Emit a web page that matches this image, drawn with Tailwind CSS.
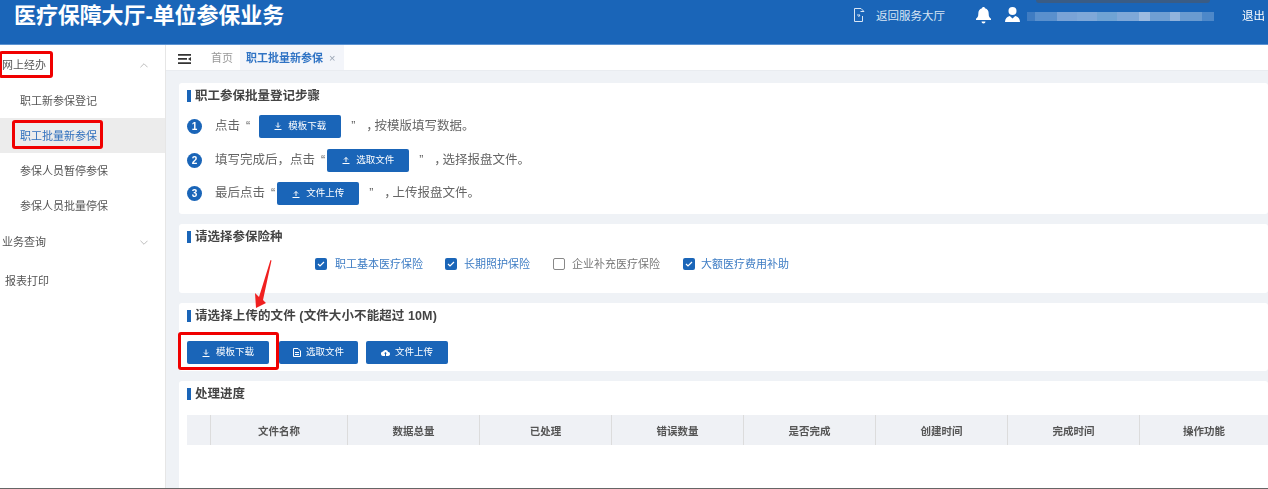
<!DOCTYPE html>
<html lang="zh">
<head>
    <meta charset="UTF-8">
    <title>医疗保障大厅-单位参保业务</title>
    <script src="https://cdn.jsdelivr.net/npm/@tailwindcss/browser@4"></script>
</head>
<body class="bg-white font-['Liberation_Sans','Noto_Sans_CJK_SC',sans-serif]">
<div class="relative w-[1268px] h-[489px] overflow-hidden flex flex-col blur-[0.6px]">

    <!-- header -->
    <header class="h-[45px] shrink-0 bg-[#1a65b8] border-b border-[#5c93d2] flex pt-[3px] pl-[14px] text-white">
        <h1 class="text-[22px] leading-[25px] font-bold tracking-[-0.1px]">医疗保障大厅-单位参保业务</h1>
        <div class="ml-auto flex items-start pt-[3px] text-[11.500px] leading-[20px] text-[#d8e5f4]">
            <svg class="w-[12px] h-[16px] mt-[1px]" viewBox="0 0 12 16" fill="none" stroke="#d8e5f4" stroke-width="1">
                <path d="M8 1.500H1.500v13h8V9"/><path d="M8 1.500l3 3M11 4.500H7.500"/><path d="M4 8h3l-1.500 2"/>
            </svg>
            <span class="ml-[11px] w-[99px]">返回服务大厅</span>
            <svg class="w-[17px] h-[18px]" viewBox="0 0 17 18" fill="#fff">
                <path d="M8.500 1c.9 0 1.500.6 1.500 1.300 2.600.7 3.700 2.800 3.700 5.500 0 2.500.6 3.800 2.300 5v1.200H1v-1.200c1.700-1.200 2.300-2.500 2.300-5 0-2.700 1.100-4.800 3.700-5.500C7 1.600 7.600 1 8.500 1zM6.500 15.500h4a2 2 0 0 1-4 0z"/>
            </svg>
            <svg class="ml-[12px] w-[17px] h-[17px]" viewBox="0 0 17 17" fill="#fff">
                <circle cx="8.500" cy="5" r="4"/>
                <path d="M1 16c0-3.500 2-5.500 4.800-6l2.700 2.500L11.200 10c2.800.5 4.800 2.500 4.800 6z"/>
            </svg>
            <div class="ml-[6px] mt-[6px] w-[187px] h-[9px] flex">
                <i class="w-[8px] bg-[#3f7cc2]"></i><i class="w-[22px] bg-[#5a90cd]"></i><i class="w-[20px] bg-[#7aa3d6]"></i><i class="w-[20px] bg-[#7fa8d8]"></i><i class="w-[20px] bg-[#6fa3d4]"></i><i class="w-[22px] bg-[#7fa8d8]"></i><i class="w-[11px] bg-[#9dbbe0]"></i><i class="w-[20px] bg-[#6f9fd3]"></i><i class="w-[10px] bg-[#91b3dc]"></i><i class="w-[22px] bg-[#6a9bd0]"></i><i class="w-[12px] bg-[#4d88c9]"></i>
            </div>
            <span class="ml-[28px] w-[26px] text-white">退出</span>
        </div>
    </header>

    <div class="flex flex-1 min-h-0">
        <!-- sidebar -->
        <aside class="w-[166px] shrink-0 bg-white border-r border-[#e6e6e6] text-[11px] text-[#555]">
            <div class="h-[37px] mt-[1px] pt-[2px] pl-[2px] pr-[17px] flex items-center justify-between">
                <span>网上经办</span>
                <svg class="w-[8px] h-[5px]" viewBox="0 0 9 5" fill="none" stroke="#b5b5b5"><path d="M.5 4.500l4-4 4 4"/></svg>
            </div>
            <div class="h-[35px] pt-[2px] pl-[20px] flex items-center">职工新参保登记</div>
            <div class="h-[35px] pt-[2px] pl-[20px] flex items-center bg-[#ececec] text-[#2f6fbd]">职工批量新参保</div>
            <div class="h-[35px] pt-[2px] pl-[20px] flex items-center">参保人员暂停参保</div>
            <div class="h-[34px] pt-[2px] pl-[20px] flex items-center">参保人员批量停保</div>
            <div class="h-[39px] pt-[2px] pl-[2px] pr-[17px] flex items-center justify-between">
                <span>业务查询</span>
                <svg class="w-[8px] h-[5px]" viewBox="0 0 9 5" fill="none" stroke="#b5b5b5"><path d="M.5.5l4 4 4-4"/></svg>
            </div>
            <div class="h-[39px] pt-[2px] pl-[5px] flex items-center">报表打印</div>
        </aside>

        <!-- main -->
        <main class="flex-1 min-w-0 bg-[#eff2f6] flex flex-col">
            <div class="h-[26px] shrink-0 bg-white flex items-stretch pl-[12px] text-[11px] text-[#999] border-b border-[#e9ecf0]">
                <svg class="w-[13px] h-[10px] mt-[9px]" viewBox="0 0 13 10" fill="#333">
                    <path d="M0 0h13v1.800H0zM0 4h9v1.800H0zM0 8.200h13V10H0zM10 4.900l3-2v4z"/>
                </svg>
                <span class="ml-[20px] leading-[26px]">首页</span>
                <div class="ml-[7px] w-[104px] bg-[#f3f5fa] pl-[6px] flex leading-[26px]">
                    <span class="text-[#2f73c4] font-bold">职工批量新参保</span>
                    <span class="ml-[6px] text-[#9aa5b5]">×</span>
                </div>
            </div>

            <div class="flex-1 min-h-0 pl-[13px] pt-[12px] flex flex-col gap-[10px]">
                <!-- steps -->
                <section class="h-[131px] shrink-0 bg-white rounded-[3px] pl-[8px] pt-[4px]">
                    <h2 class="flex items-center text-[12.500px] leading-[18px] font-bold text-[#444]">
                        <i class="w-[4px] h-[12px] bg-[#1a65b8] mr-[4px]"></i>职工参保批量登记步骤
                    </h2>
                    <div class="mt-[4px] h-[34px] flex items-center text-[12.500px] text-[#666]">
                        <b class="w-[15px] h-[15px] rounded-full bg-[#1a65b8] text-white text-[10px] font-bold flex items-center justify-center mr-[13px]">1</b>
                        <span>点击</span><span class="ml-[6px]">“</span>
                        <button class="ml-[9px] w-[82px] h-[23px] rounded-[2px] bg-[#1a65b8] text-white text-[9.500px] flex items-center justify-center gap-[6px]">
                            <svg class="w-[8px] h-[8px]" viewBox="0 0 8 8" fill="none" stroke="#fff"><path d="M4 .5v4.500M2 3.500L4 5.500l2-2M.5 7.500h7"/></svg>模板下载
                        </button>
                        <span class="ml-[10px]">”</span><span class="ml-[11px]"><span class="tracking-[-4.500px]">，</span>按模版填写数据。</span>
                    </div>
                    <div class="h-[34px] flex items-center text-[12.500px] text-[#666]">
                        <b class="w-[15px] h-[15px] rounded-full bg-[#1a65b8] text-white text-[10px] font-bold flex items-center justify-center mr-[13px]">2</b>
                        <span>填写完成后，点击</span><span class="ml-[6px]">“</span>
                        <button class="ml-[2px] w-[82px] h-[23px] rounded-[2px] bg-[#1a65b8] text-white text-[9.500px] flex items-center justify-center gap-[6px]">
                            <svg class="w-[8px] h-[8px]" viewBox="0 0 8 8" fill="none" stroke="#fff"><path d="M4 6V1.500M2 3.500L4 1.500l2 2M.5 7.500h7"/></svg>选取文件
                        </button>
                        <span class="ml-[10px]">”</span><span class="ml-[11px]"><span class="tracking-[-4.500px]">，</span>选择报盘文件。</span>
                    </div>
                    <div class="h-[33px] flex items-center text-[12.500px] text-[#666]">
                        <b class="w-[15px] h-[15px] rounded-full bg-[#1a65b8] text-white text-[10px] font-bold flex items-center justify-center mr-[13px]">3</b>
                        <span>最后点击</span><span class="ml-[6px]">“</span>
                        <button class="ml-[2px] w-[82px] h-[23px] rounded-[2px] bg-[#1a65b8] text-white text-[9.500px] flex items-center justify-center gap-[6px]">
                            <svg class="w-[8px] h-[8px]" viewBox="0 0 8 8" fill="none" stroke="#fff"><path d="M4 6V1.500M2 3.500L4 1.500l2 2M.5 7.500h7"/></svg>文件上传
                        </button>
                        <span class="ml-[10px]">”</span><span class="ml-[11px]"><span class="tracking-[-4.500px]">，</span>上传报盘文件。</span>
                    </div>
                </section>

                <!-- insurance types -->
                <section class="h-[69px] shrink-0 bg-white rounded-[3px] pl-[8px] pt-[4px]">
                    <h2 class="flex items-center text-[12.500px] leading-[18px] font-bold text-[#444]">
                        <i class="w-[4px] h-[12px] bg-[#1a65b8] mr-[4px]"></i>请选择参保险种
                    </h2>
                    <div class="mt-[10px] pl-[128px] flex items-center text-[11px] leading-[16px]">
                        <span class="w-[12px] h-[12px] rounded-[2px] bg-[#1a65b8] flex items-center justify-center mr-[8px]">
                            <svg class="w-[8px] h-[8px]" viewBox="0 0 8 8" fill="none" stroke="#fff" stroke-width="1.200"><path d="M1 4l2 2 4-4"/></svg>
                        </span>
                        <span class="text-[#3d7cc4] mr-[22px]">职工基本医疗保险</span>
                        <span class="w-[12px] h-[12px] rounded-[2px] bg-[#1a65b8] flex items-center justify-center mr-[7px]">
                            <svg class="w-[8px] h-[8px]" viewBox="0 0 8 8" fill="none" stroke="#fff" stroke-width="1.200"><path d="M1 4l2 2 4-4"/></svg>
                        </span>
                        <span class="text-[#3d7cc4] mr-[23px]">长期照护保险</span>
                        <span class="w-[12px] h-[12px] rounded-[2px] border border-[#888] bg-white mr-[7px]"></span>
                        <span class="text-[#777] mr-[23px]">企业补充医疗保险</span>
                        <span class="w-[12px] h-[12px] rounded-[2px] bg-[#1a65b8] flex items-center justify-center mr-[6px]">
                            <svg class="w-[8px] h-[8px]" viewBox="0 0 8 8" fill="none" stroke="#fff" stroke-width="1.200"><path d="M1 4l2 2 4-4"/></svg>
                        </span>
                        <span class="text-[#3d7cc4]">大额医疗费用补助</span>
                    </div>
                </section>

                <!-- upload -->
                <section class="h-[68px] shrink-0 bg-white rounded-[3px] pl-[8px] pt-[4px]">
                    <h2 class="flex items-center text-[12.500px] leading-[18px] font-bold text-[#444] tracking-[0.1px]">
                        <i class="w-[4px] h-[12px] bg-[#1a65b8] mr-[4px]"></i>请选择上传的文件 (文件大小不能超过 10M)
                    </h2>
                    <div class="mt-[16px] flex">
                        <button class="w-[82px] h-[23px] rounded-[2px] bg-[#1a65b8] text-white text-[9.500px] flex items-center justify-center gap-[6px]">
                            <svg class="w-[8px] h-[8px]" viewBox="0 0 8 8" fill="none" stroke="#fff"><path d="M4 .5v4.500M2 3.500L4 5.500l2-2M.5 7.500h7"/></svg>模板下载
                        </button>
                        <button class="ml-[10px] w-[79px] h-[23px] rounded-[2px] bg-[#1a65b8] text-white text-[9.500px] flex items-center justify-center gap-[5px]">
                            <svg class="w-[8px] h-[9px]" viewBox="0 0 8 9" fill="none" stroke="#fff"><path d="M.5.5h4.500l2.500 2.500v5.500h-7zM2 4.500h4M2 6.500h4"/></svg>选取文件
                        </button>
                        <button class="ml-[8px] w-[82px] h-[23px] rounded-[2px] bg-[#1a65b8] text-white text-[9.500px] flex items-center justify-center gap-[5px]">
                            <svg class="w-[9px] h-[7px]" viewBox="0 0 9 7" fill="#fff"><path d="M2.300 7a2.200 2.200 0 0 1-.3-4.400 2.700 2.700 0 0 1 5.100.4A2 2 0 0 1 7 7H5V4.500h1L4.500 3 3 4.500h1V7z"/></svg>文件上传
                        </button>
                    </div>
                </section>

                <!-- progress -->
                <section class="flex-1 bg-white rounded-t-[3px] pl-[8px] pt-[4px]">
                    <h2 class="flex items-center text-[12.500px] leading-[18px] font-bold text-[#444]">
                        <i class="w-[4px] h-[12px] bg-[#1a65b8] mr-[4px]"></i>处理进度
                    </h2>
                    <div class="mt-[12px] h-[30px] bg-[#eff1f5] grid grid-rows-[30px] grid-cols-[24px_137px_132px_132px_132px_132px_132px_132px_128px] text-[10.500px] font-bold text-[#555] leading-[32px] text-center">
                        <div class="border-r border-[#dcdcdc]"></div>
                        <div class="border-r border-[#dcdcdc]">文件名称</div>
                        <div class="border-r border-[#dcdcdc]">数据总量</div>
                        <div class="border-r border-[#dcdcdc]">已处理</div>
                        <div class="border-r border-[#dcdcdc]">错误数量</div>
                        <div class="border-r border-[#dcdcdc]">是否完成</div>
                        <div class="border-r border-[#dcdcdc]">创建时间</div>
                        <div class="border-r border-[#dcdcdc]">完成时间</div>
                        <div>操作功能</div>
                    </div>
                </section>
            </div>
        </main>
    </div>

    <!-- annotations drawn over the page -->
    <div class="absolute left-[1036px] top-0 w-[174px] h-[3px] rounded-b-full bg-[#3a5c85]"></div>
    <div class="absolute left-[-1px] top-[51px] w-[54px] h-[27px] border-[3px] border-[#f00000] rounded-[3px]"></div>
    <div class="absolute left-[12px] top-[120px] w-[91px] h-[29px] border-[3px] border-[#f00000] rounded-[3px]"></div>
    <div class="absolute left-[178px] top-[332px] w-[101px] h-[38px] border-[3px] border-[#f00000] rounded-[3px]"></div>
    <svg class="absolute left-[250px] top-[258px] w-[24px] h-[54px]" viewBox="0 0 24 54" fill="#f02020">
        <path d="M20.500 2l1 .5L13 42l3 3-10 5-1-15 4 4z"/>
    </svg>
    <div class="absolute left-0 bottom-0 w-full h-[1px] bg-[#666]"></div>
</div>
</body>
</html>
